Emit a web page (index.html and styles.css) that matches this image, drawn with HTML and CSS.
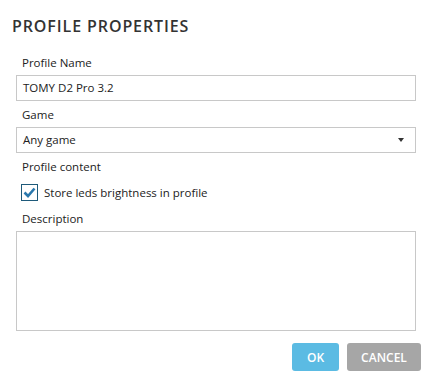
FILE: index.html
```
<!DOCTYPE html>
<html lang="en">
<head>
    <meta charset="UTF-8">
    <meta name="viewport" content="width=device-width, initial-scale=1.0">
    <title>Profile Properties</title>
    <link rel="stylesheet" href="styles.css">
</head>
<body>
    <div class="dialog">
        <h1 class="dialog-title">PROFILE PROPERTIES</h1>

        <div class="field">
            <label class="field-label">Profile Name</label>
            <div class="input">TOMY D2 Pro 3.2</div>
        </div>

        <div class="field">
            <label class="field-label">Game</label>
            <div class="input select">
                <span>Any game</span>
                <span class="select-arrow"></span>
            </div>
        </div>

        <div class="field">
            <label class="field-label">Profile content</label>
            <div class="check-row">
                <span class="checkbox">
                    <svg width="13" height="11" viewBox="0 0 13 11">
                        <path d="M1.5 5.5 L5 9 L11.5 1.5" fill="none" stroke="#2a78ad" stroke-width="2.6"/>
                    </svg>
                </span>
                <span>Store leds brightness in profile</span>
            </div>
        </div>

        <div class="field">
            <label class="field-label">Description</label>
            <div class="input textarea"></div>
        </div>

        <div class="actions">
            <button class="btn btn-ok">OK</button>
            <button class="btn btn-cancel">CANCEL</button>
        </div>
    </div>
</body>
</html>
```

FILE: styles.css
```
body {
    margin: 0;
    background-color: #fff;
    font-family: "Open Sans", Arial, sans-serif;
    font-size: 11.5px;
    color: #222;
}

.dialog {
    padding: 15px 16px 0 16px;
    width: 400px;
}

.dialog-title {
    margin: 0 0 18px -4px;
    font-size: 16px;
    letter-spacing: 0.9px;
    font-weight: 600;
    color: #333;
    line-height: 22px;
}

.field {
    margin-bottom: 6px;
}

.field-label {
    display: block;
    padding-left: 6px;
    line-height: 16px;
    margin-bottom: 4px;
}

/* Kotak input */
.input {
    box-sizing: border-box;
    height: 26px;
    border: 1px solid #c8c8c8;
    padding: 0 6px;
    line-height: 24px;
}

.select {
    display: flex;
    justify-content: space-between;
    align-items: center;
}

.select-arrow {
    width: 0;
    height: 0;
    margin-right: 5px;
    border-left: 3px solid transparent;
    border-right: 3px solid transparent;
    border-top: 4px solid #333;
}

.check-row {
    display: flex;
    align-items: center;
    gap: 6px;
    padding: 5px 0 4px 5px;
}

.checkbox {
    box-sizing: border-box;
    width: 17px;
    height: 17px;
    border: 1px solid #1e5a7a;
    display: flex;
    align-items: center;
    justify-content: center;
}

.textarea {
    height: 100px;
}

.actions {
    display: flex;
    justify-content: flex-end;
    gap: 8px;
    margin-top: 12px;
    margin-right: -5px;
}

.btn {
    height: 28px;
    border: none;
    border-radius: 3px;
    color: white;
    font-family: "Open Sans", Arial, sans-serif;
    font-weight: 600;
    font-size: 12px;
    cursor: pointer;
}

.btn-ok {
    width: 47px;
    background-color: #5bbbe3;
}

.btn-cancel {
    width: 74px;
    background-color: #a6a6a6;
}
```
